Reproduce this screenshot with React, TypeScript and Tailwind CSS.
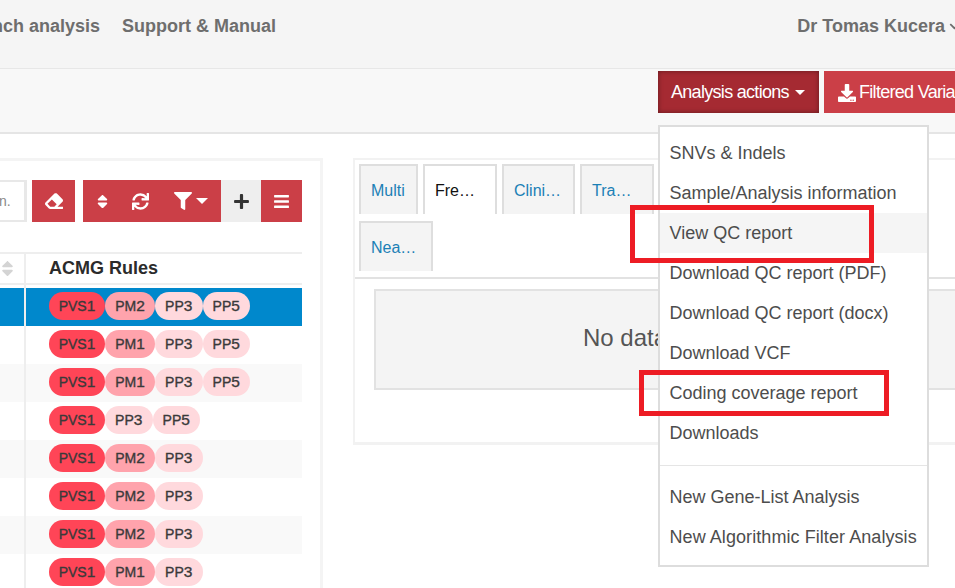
import React from "react";
import { FaEraser, FaSort, FaSync, FaFilter, FaPlus, FaBars, FaDownload, FaChevronDown } from "react-icons/fa";

type Rule = "PVS1" | "PM1" | "PM2" | "PP3" | "PP5";

const rows: Rule[][] = [
  ["PVS1", "PM2", "PP3", "PP5"],
  ["PVS1", "PM1", "PP3", "PP5"],
  ["PVS1", "PM1", "PP3", "PP5"],
  ["PVS1", "PP3", "PP5"],
  ["PVS1", "PM2", "PP3"],
  ["PVS1", "PM2", "PP3"],
  ["PVS1", "PM2", "PP3"],
  ["PVS1", "PM1", "PP3"],
];

function Pill({ rule }: { rule: Rule }) {
  const tone =
    rule === "PVS1"
      ? "w-[56px] bg-[#ff4557]"
      : rule === "PM1" || rule === "PM2"
        ? "w-[50px] bg-[#ffa3ac]"
        : "w-[47.5px] bg-[#ffd9dd]";
  return (
    <span
      className={`${tone} flex h-[28px] items-baseline justify-center rounded-[14px] pt-[6px] text-[14px] leading-none text-[#3a3a3a] [-webkit-text-stroke:0.35px_#3a3a3a]`}
    >
      {rule.slice(0, -1)}
      <span className="text-[15.5px] leading-none">{rule.slice(-1)}</span>
    </span>
  );
}

function Tab({ label, width, active }: { label: string; width: string; active?: boolean }) {
  return (
    <div
      className={`${width} ${active ? "bg-white text-[#111]" : "bg-[#f4f4f4] text-[#1b80b6]"} flex h-[50px] items-center border-2 border-b-0 border-[#dedede] pl-[10px] pt-[2px] text-[16px]`}
    >
      {label}
    </div>
  );
}

function MenuItem({ label, active, wide }: { label: string; active?: boolean; wide?: boolean }) {
  return (
    <div
      className={`${active ? "bg-[#f5f5f5]" : ""} ${wide ? "tracking-[0.07px]" : ""} flex h-[40px] items-center whitespace-nowrap pl-[9.5px] text-[18px] text-[#4d4d4d]`}
    >
      {label}
    </div>
  );
}

export default function App() {
  return (
    <div className="relative h-[588px] w-[955px] overflow-hidden bg-white font-['Liberation_Sans',Arial,sans-serif]">
      {/* Top navigation */}
      <div className="flex h-[69px] items-start whitespace-nowrap border-b border-[#e7e7e7] bg-[#f5f5f5] text-[18px] font-bold text-[#6e6e6e]">
        <div className="ml-[-38px] flex h-[52px] items-center">Branch analysis</div>
        <div className="ml-[22px] flex h-[52px] items-center">Support &amp; Manual</div>
        <div className="ml-auto mr-[-5px] flex h-[52px] items-center">
          Dr Tomas Kucera
          <FaChevronDown className="ml-[4px] text-[11px]" />
        </div>
      </div>

      {/* Action bar */}
      <div className="flex h-[65px] gap-[5px] whitespace-nowrap border-b-2 border-[#e5e5e5] bg-[#f8f8f8] pl-[658px] pt-[2px] text-[18px] tracking-[-0.7px] text-white">
        <div className="flex h-[42px] w-[161px] shrink-0 items-center gap-[6px] bg-[#a52a32] pl-[13px] pt-[1px] shadow-[inset_0_0_5px_rgba(0,0,0,0.4)]">
          Analysis actions
          <span className="h-0 w-0 border-x-[5px] border-t-[5px] border-x-transparent border-t-white" />
        </div>
        <div className="flex h-[42px] w-[200px] shrink-0 items-center gap-[3px] bg-[#cb3f47] pl-[14px] pt-[1px]">
          <FaDownload className="text-[18px]" />
          Filtered Variants
        </div>
      </div>

      {/* Content */}
      <div className="flex pt-[24px]">
        {/* Left panel */}
        <div className="h-[500px] w-[323px] shrink-0 border-r-[3px] border-t-[3px] border-[#f4f4f4]">
          <div className="mt-[19px] flex h-[42px] text-white">
            <div className="flex h-[42px] w-[27px] items-center whitespace-nowrap border-y-2 border-r-[3px] border-[#e8e8e8] text-[14px] text-[#888]">
              <span className="ml-[-1px]">n.</span>
            </div>
            <div className="ml-[5px] flex w-[43px] items-center justify-center bg-[#cb3f47] text-[18px]">
              <FaEraser />
            </div>
            <div className="ml-[8px] flex w-[138px] items-center bg-[#cb3f47]">
              <FaSort className="ml-[11px] text-[17px]" />
              <FaSync className="ml-[21px] text-[17px]" />
              <FaFilter className="ml-[25px] text-[18px]" />
              <span className="ml-[4px] h-0 w-0 border-x-[6px] border-t-[6px] border-x-transparent border-t-white" />
            </div>
            <div className="flex w-[40px] items-center justify-center bg-[#eeeeee] text-[17px] text-[#333]">
              <FaPlus />
            </div>
            <div className="flex w-[41px] items-center justify-center bg-[#cb3f47] text-[17px]">
              <FaBars />
            </div>
          </div>

          <div className="mr-[18px] mt-[30px]">
            <div className="flex h-[33px] border-y-2 border-[#eeeeee]">
              <div className="flex w-[24px] items-center text-[19px] text-[#d4d4d4]">
                <FaSort className="ml-[-2px]" />
              </div>
              <div className="flex flex-1 items-center border-l-2 border-[#eeeeee] pl-[23px] text-[18px] font-bold text-[#2b2b2b]">
                ACMG Rules
              </div>
            </div>
            <div className="h-[3px]">
              <div className="ml-[24px] h-full w-[2px] bg-[#eeeeee]" />
            </div>
            {rows.map((row, i) => (
              <div
                key={i}
                className={`${i === 0 ? "bg-[#0088cc]" : i % 2 === 0 ? "bg-[#f9f9f9]" : "bg-white"} flex h-[38px]`}
              >
                <div className="w-[24px]" />
                <div className="flex flex-1 items-start border-l-2 border-[#eeeeee] pl-[23px] pt-[4px]">
                  {row.map((r, j) => (
                    <Pill key={j} rule={r} />
                  ))}
                </div>
              </div>
            ))}
          </div>
        </div>

        {/* Right panel */}
        <div className="ml-[30px] h-[287px] w-[700px] shrink-0 border-b-[3px] border-l-2 border-t-2 border-[#f2f2f2] pt-[4px]">
          <div className="ml-[4px] flex gap-[5px]">
            <Tab label="Multi" width="w-[59px]" />
            <Tab label="Fre…" width="w-[74px]" active />
            <Tab label="Clini…" width="w-[73px]" />
            <Tab label="Tra…" width="w-[74px]" />
          </div>
          <div className="ml-[4px] mt-[7px] flex">
            <Tab label="Nea…" width="w-[74px]" />
          </div>
          <div className="mt-[6px] border-t-2 border-[#e2e2e2] pl-[19px] pt-[10px]">
            <div className="flex h-[101px] items-center whitespace-nowrap border-2 border-[#e2e2e2] bg-[#f4f4f4] pb-[3px] pl-[207px] text-[24px] text-[#555]">
              No data available
            </div>
          </div>
        </div>
      </div>

      {/* Dropdown menu */}
      <div className="absolute left-[658px] top-[125px] h-[442px] w-[271px] border-2 border-[#dddddd] bg-white py-[6px]">
        <MenuItem label="SNVs & Indels" />
        <MenuItem label="Sample/Analysis information" />
        <MenuItem label="View QC report" active />
        <MenuItem label="Download QC report (PDF)" />
        <MenuItem label="Download QC report (docx)" />
        <MenuItem label="Download VCF" />
        <MenuItem label="Coding coverage report" />
        <MenuItem label="Downloads" />
        <div className="mb-[11px] mt-[12px] h-px bg-[#e5e5e5]" />
        <MenuItem label="New Gene-List Analysis" />
        <MenuItem label="New Algorithmic Filter Analysis" wide />
      </div>

      {/* Annotation boxes */}
      <div className="absolute left-[630px] top-[205px] h-[58px] w-[244px] border-[5px] border-[#ed1c24]" />
      <div className="absolute left-[639px] top-[370px] h-[46px] w-[250px] border-[5px] border-[#ed1c24]" />
    </div>
  );
}
